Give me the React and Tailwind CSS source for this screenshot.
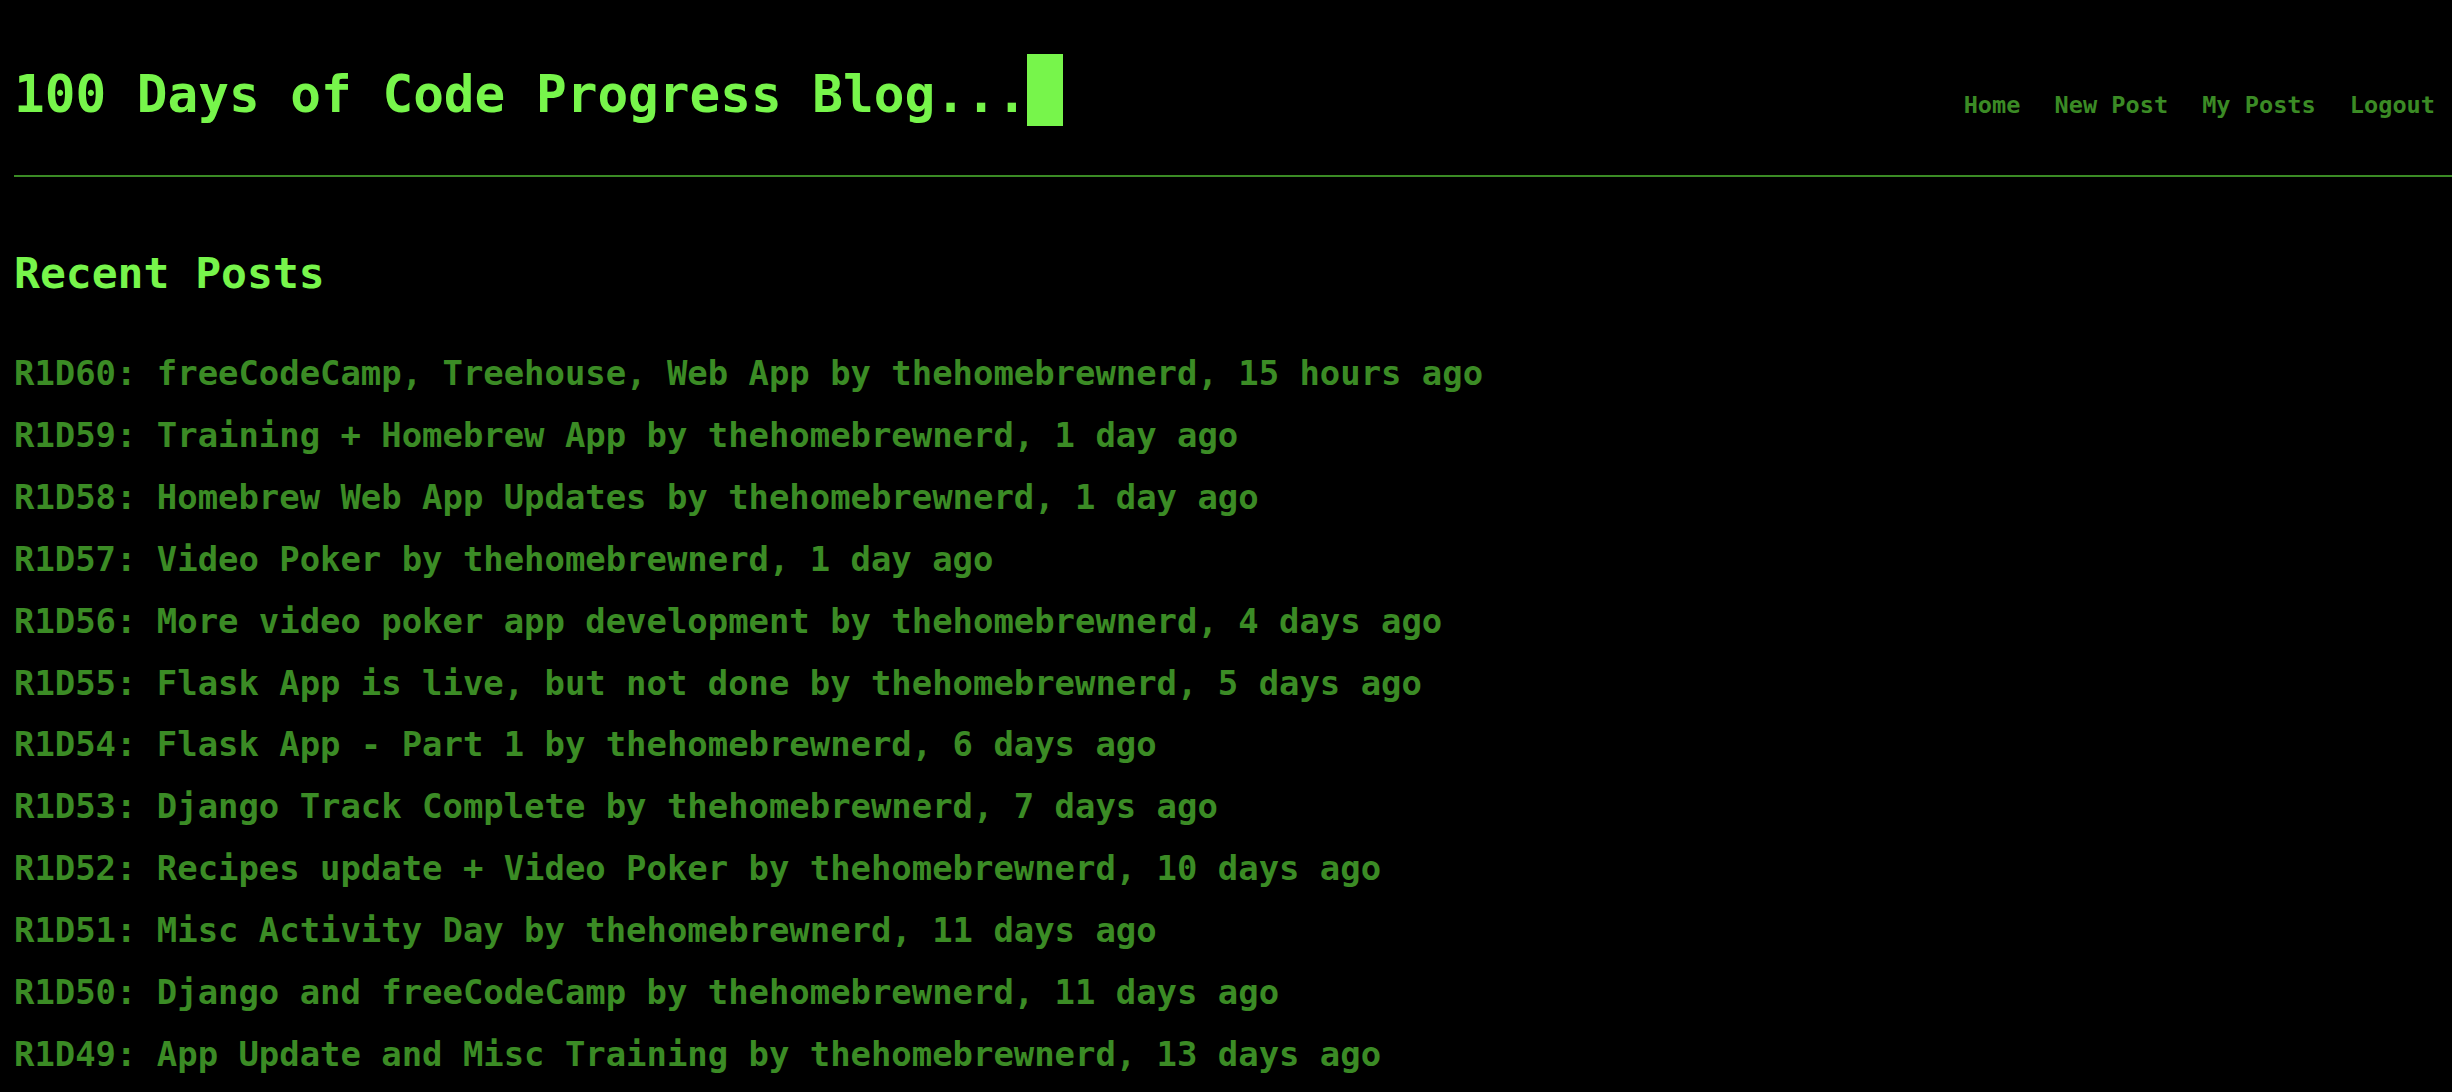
const posts = [
  'R1D60: freeCodeCamp, Treehouse, Web App by thehomebrewnerd, 15 hours ago',
  'R1D59: Training + Homebrew App by thehomebrewnerd, 1 day ago',
  'R1D58: Homebrew Web App Updates by thehomebrewnerd, 1 day ago',
  'R1D57: Video Poker by thehomebrewnerd, 1 day ago',
  'R1D56: More video poker app development by thehomebrewnerd, 4 days ago',
  'R1D55: Flask App is live, but not done by thehomebrewnerd, 5 days ago',
  'R1D54: Flask App - Part 1 by thehomebrewnerd, 6 days ago',
  'R1D53: Django Track Complete by thehomebrewnerd, 7 days ago',
  'R1D52: Recipes update + Video Poker by thehomebrewnerd, 10 days ago',
  'R1D51: Misc Activity Day by thehomebrewnerd, 11 days ago',
  'R1D50: Django and freeCodeCamp by thehomebrewnerd, 11 days ago',
  'R1D49: App Update and Misc Training by thehomebrewnerd, 13 days ago',
];

const navLinks = ['Home', 'New Post', 'My Posts', 'Logout'];

export default function App() {
  return (
    <div className="h-screen bg-black font-['DejaVu_Sans_Mono',monospace] font-bold whitespace-pre overflow-hidden">
      {/* header */}
      <header className="flex justify-between items-start pl-[14px] pr-[17px] pt-[54px]">
        <h1 className="flex items-start text-[#77f54b]">
          <span className="text-[51px] leading-none pt-[15px]">100 Days of Code Progress Blog...</span>
          <span className="block w-[36px] h-[72px] bg-[#77f54b]" />
        </h1>
        <nav className="flex gap-[34px] mt-[40px] text-[23.6px] leading-none text-[#3b8b25]">
          {navLinks.map((link) => (
            <a key={link} href="#">{link}</a>
          ))}
        </nav>
      </header>

      <hr className="ml-[14px] mt-[49px] border-0 border-t-2 border-[#3b8b25]" />

      <main className="pl-[14px]">
        <h2 className="mt-[75px] text-[43px] leading-none text-[#77f54b]">Recent Posts</h2>
        <ul className="mt-[48px] text-[33.9px] leading-[61.9px] text-[#3b8b25]">
          {posts.map((post) => (
            <li key={post}>
              <a href="#">{post}</a>
            </li>
          ))}
        </ul>
      </main>
    </div>
  );
}
